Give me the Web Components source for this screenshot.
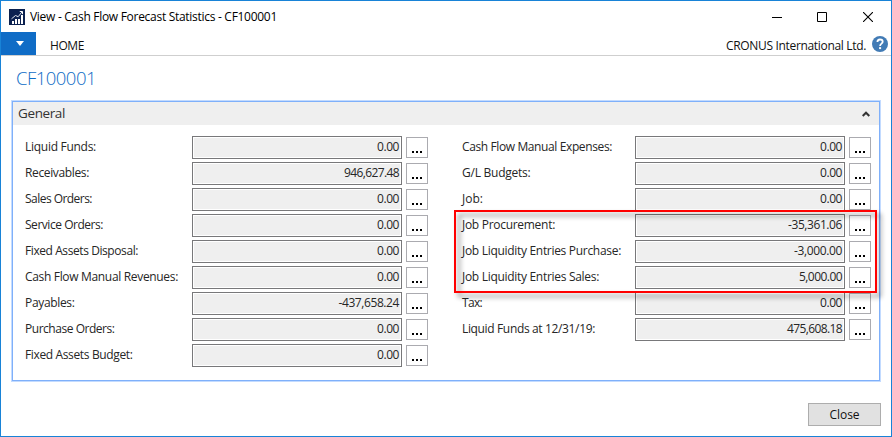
<!DOCTYPE html>
<html lang="en">
<head>
<meta charset="utf-8">
<title>View - Cash Flow Forecast Statistics - CF100001</title>
<style>
html,body{margin:0;width:892px;height:437px;overflow:hidden;background:#fff;font:12px/16px "Open Sans","Noto Sans",sans-serif;color:#262626}
</style>
</head>
<body>
<stats-window></stats-window>
<script>
const define = (name, html, setup) => customElements.define(name, class extends HTMLElement {
  connectedCallback() {
    if (this.shadowRoot) return;
    const t = document.createElement('template');
    t.innerHTML = typeof html === 'function' ? html(this) : html;
    this.attachShadow({mode: 'open'}).append(t.content.cloneNode(true));
    if (setup) setup(this);
  }
});

/* One line of text tracked to a given advance width */
define('ui-text', '<style>:host{display:inline-block;white-space:pre}span{display:inline-block}</style><span><slot></slot></span>', el => {
  const s = el.shadowRoot.querySelector('span');
  const w = +el.getAttribute('w');
  if (w) {
    const n = el.textContent.length;
    s.style.letterSpacing = ((w - s.getBoundingClientRect().width) / n) + 'px';
  }
});

define('title-bar', `<style>
:host{display:flex;height:31px;align-items:center;padding:0 18px 0 8px;box-sizing:border-box;color:#000}
.t{margin-left:5px;flex:1}
svg{display:block}
.c{display:flex;gap:35px}
</style>
<svg width="16" height="16" viewBox="0 0 16 16"><path fill="#0b2150" d="M0 0h16v16H0z"/><path fill="#fff" d="M3 12h2v3H3zM6 10h2v5H6zM9 10h2v5H9zM12 6h2v9h-2z"/><path d="M2.5 9.8 6.5 6.5l2.7 1.2 4-5" fill="none" stroke="#dfe4ee"/><path d="M10.8 2.5h2.7v2.7" fill="none" stroke="#fff"/></svg>
<div class="t"><ui-text w="247">View - Cash Flow Forecast Statistics - CF100001</ui-text></div>
<div class="c">
<svg width="10" height="10"><path d="M0 5.5h10" stroke="#000"/></svg>
<svg width="11" height="10" viewBox="0 0 11 10"><path d="M.5.5h9v9h-9z" fill="none" stroke="#000"/></svg>
<svg width="10" height="10"><path d="M0 0l10 10M10 0 0 10" stroke="#000" stroke-width="1.1"/></svg>
</div>`);

define('ribbon-bar', `<style>
:host{display:flex;height:24px;border-bottom:1px solid #cfcfcf;box-sizing:border-box;color:#111}
.m{width:35px;height:23px;background:#0f6cc6;display:flex;align-items:center;justify-content:center;margin-right:14px}
.h{margin-top:6px;flex:1}.n{margin-top:6px}.q{margin:4px 3px 0 6px}
svg{display:block}
</style>
<div class="m"><svg width="8" height="5" style="margin:0 0 0 3px"><path d="M0 0h8L4 5z" fill="#fff"/></svg></div>
<ui-text class="h" w="34">HOME</ui-text>
<ui-text class="n" w="140">CRONUS International Ltd.</ui-text>
<svg class="q" width="16" height="16" viewBox="0 0 16 16"><circle cx="8" cy="8" r="8" fill="#427bb5"/><path d="M5.4 6.1C5.4 4.3 6.4 3.5 8 3.5s2.7.9 2.7 2.3C10.7 7.6 8.1 7.8 8.1 10" fill="none" stroke="#fff" stroke-width="1.8"/><path d="M7.1 11.1h2v2h-2z" fill="#fff"/></svg>`);

define('amount-field', el => `<style>
:host{display:flex;height:23px;align-items:center}
.l{flex:1;display:flex;height:17px}
.b{width:210px;height:23px;box-sizing:border-box;border:1px solid #78787a;padding:1px 1px;background:#efefef;box-shadow:inset 0 0 0 1px #fff;text-align:right;line-height:18px}
.b ui-text{margin-right:1px}
.d{width:22px;height:21px;box-sizing:border-box;border:1px solid #ababb0;margin-left:4px;background:#fff;display:flex;justify-content:center;padding-top:13px}
svg{display:block}
</style>
<div class="l"><ui-text w="${el.getAttribute('lw')}">${el.getAttribute('label')}</ui-text></div>
<div class="b"><ui-text w="${el.getAttribute('vw')}">${el.getAttribute('value')}</ui-text></div>
<div class="d"><svg width="10" height="2"><path d="M0 0h2v2H0zM4 0h2v2H4zM8 0h2v2H8z" fill="#000"/></svg></div>`);

define('fast-tab', `<style>
:host{display:block;width:870px;height:282px;box-sizing:border-box;border:1px solid #c3dbff}
.i{border:1px solid #7fb0fa;height:278px}
.h{height:23px;background:#efefef;display:flex;justify-content:space-between;align-items:center;padding:0 9px 0 5px;font-size:13.5px;color:#333}
.h ui-text{margin-top:-2px}
.g{display:grid;grid-template-columns:403px 409px;column-gap:34px;padding:11px 0 0 12px}
</style>
<div class="i"><div class="h"><ui-text w="47">General</ui-text><svg width="8" height="6"><path d="M.7 5 4 1.7 7.3 5" fill="none" stroke="#333" stroke-width="2"/></svg></div>
<div class="g"><slot></slot></div></div>`);

define('field-column', '<style>:host{display:flex;flex-direction:column;gap:3px}</style><slot></slot>');

define('highlight-frame', `<style>:host{position:absolute;left:454px;top:210px;width:423px;height:83px;box-sizing:border-box;border:2px solid #f00;filter:drop-shadow(4px 4px 2.5px rgba(0,0,0,.48))}</style>`);

define('push-button', `<style>:host{display:flex;width:73px;height:23px;box-sizing:border-box;border:1px solid #adadad;background:#e1e1e1;align-items:center;justify-content:center;color:#111}</style><ui-text w="30">Close</ui-text>`);

const left = [['Liquid Funds:',71,'0.00',22],['Receivables:',64,'946,627.48',55],['Sales Orders:',67,'0.00',22],['Service Orders:',78,'0.00',22],['Fixed Assets Disposal:',113,'0.00',22],['Cash Flow Manual Revenues:',153,'0.00',22],['Payables:',49.5,'-437,658.24',60.5],['Purchase Orders:',89.5,'0.00',22],['Fixed Assets Budget:',107.5,'0.00',22]];
const right = [['Cash Flow Manual Expenses:',150,'0.00',22],['G/L Budgets:',68.5,'0.00',22],['Job:',21,'0.00',22],['Job Procurement:',93,'-35,361.06',54],['Job Liquidity Entries Purchase:',159,'-3,000.00',48],['Job Liquidity Entries Sales:',137,'5,000.00',43],['Tax:',20,'0.00',22],['Liquid Funds at 12/31/19:',133,'475,608.18',55]];
const col = rows => '<field-column>' + rows.map(r => `<amount-field label="${r[0]}" lw="${r[1]}" value="${r[2]}" vw="${r[3]}"></amount-field>`).join('') + '</field-column>';

define('stats-window', `<style>
:host{display:flex;flex-direction:column;position:relative;width:892px;height:437px;box-sizing:border-box;border:1px solid #1883d7;background:#fff}
.r{margin:11px 0 11px 15px;height:22px;line-height:22px;font-size:18.5px;font-weight:300;color:#0f6cc6}
fast-tab{margin-left:10px}
push-button{margin:21px 10px 0 auto}
highlight-frame{margin:-1px 0 0 -1px}
</style>
<title-bar></title-bar>
<ribbon-bar></ribbon-bar>
<div class="r"><ui-text w="80">CF100001</ui-text></div>
<fast-tab>${col(left)}${col(right)}</fast-tab>
<push-button></push-button>
<highlight-frame></highlight-frame>`);
</script>
</body>
</html>
